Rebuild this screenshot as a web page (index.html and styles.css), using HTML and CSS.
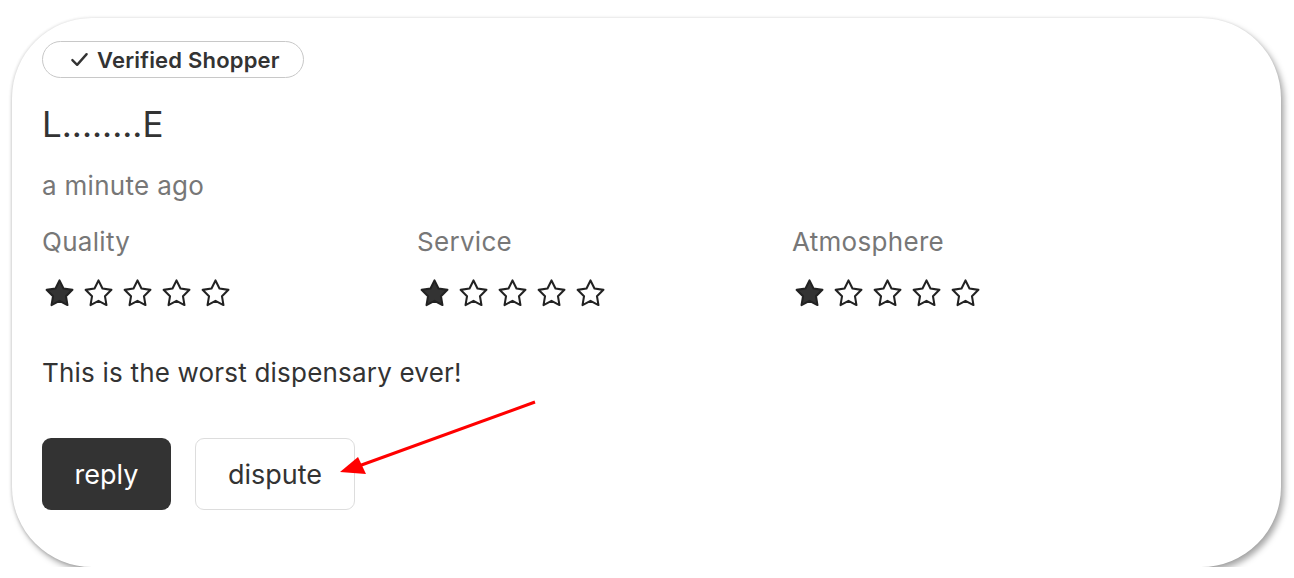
FILE: index.html
```html
<!DOCTYPE html>
<html lang="en">
  <head>
    <meta charset="UTF-8" />
    <meta name="viewport" content="width=device-width, initial-scale=1.0" />
    <title>Review</title>
    <link rel="stylesheet" href="styles.css">
  </head>
  <body>
    <!-- Review card -->
    <div class="card">
      <span class="badge">
        <svg class="check" viewBox="0 0 16 16" width="16" height="16">
          <path d="M2 8.5l4 4 8-9" fill="none" stroke="#333" stroke-width="2" stroke-linecap="round" stroke-linejoin="round" />
        </svg>
        Verified Shopper
      </span>
      <h1 class="name">L........E</h1>
      <p class="time">a minute ago</p>

      <div class="ratings">
        <div class="rating">
          <div class="label">Quality</div>
          <div class="stars" data-score="1"></div>
        </div>
        <div class="rating">
          <div class="label">Service</div>
          <div class="stars" data-score="1"></div>
        </div>
        <div class="rating">
          <div class="label">Atmosphere</div>
          <div class="stars" data-score="1"></div>
        </div>
      </div>

      <p class="text">This is the worst dispensary ever!</p>

      <div class="actions">
        <button class="btn btn-dark">reply</button>
        <button class="btn btn-light">dispute</button>
      </div>
    </div>

    <!-- Annotation arrow -->
    <svg class="arrow" width="1294" height="578" viewBox="0 0 1294 578">
      <line x1="535" y1="402" x2="356" y2="467" stroke="#f00" stroke-width="3" />
      <polygon points="340,472 358,457 366,474" fill="#f00" />
    </svg>

    <script>
      // Draw the stars for each rating
      var starPath = "M12 2.5l2.9 5.9 6.5.95-4.7 4.6 1.1 6.45L12 17.35l-5.8 3.05 1.1-6.45-4.7-4.6 6.5-.95z";
      var rows = document.querySelectorAll(".stars");
      for (var i = 0; i < rows.length; i++) {
        var score = parseInt(rows[i].getAttribute("data-score"));
        var html = "";
        for (var j = 0; j < 5; j++) {
          var fill = j < score ? "#333" : "#fff";
          html += '<svg class="star" viewBox="0 0 24 24" width="33" height="33">' +
            '<path d="' + starPath + '" fill="' + fill + '" stroke="#222" stroke-width="1.5" stroke-linejoin="round" /></svg>';
        }
        rows[i].innerHTML = html;
      }
    </script>
  </body>
</html>
```

FILE: styles.css
```css
body {
  margin: 0;
  background-color: #fff;
  font-family: Inter, "Noto Sans", sans-serif;
  color: #333;
}

.card {
  margin: 18px 13px 0 12px;
  height: 549px;
  box-sizing: border-box;
  padding: 23px 30px;
  border-radius: 80px;
  background-color: #fff;
  box-shadow: 3px 4px 6px rgba(0, 0, 0, 0.35), -1px 0 3px rgba(0, 0, 0, 0.12);
}

.badge {
  display: inline-flex;
  align-items: center;
  gap: 8px;
  height: 37px;
  box-sizing: border-box;
  padding: 0 23px 0 27px;
  border: 1px solid #c8c8c8;
  border-radius: 20px;
  font-size: 22px;
  font-weight: 600;
  letter-spacing: 0.2px;
  color: #333;
}

.check {
  width: 19px;
  height: 19px;
}

.name {
  margin: 26px 0 0;
  font-size: 35px;
  font-weight: 400;
  line-height: 40px;
}

.time {
  margin: 27px 0 0;
  font-size: 26px;
  line-height: 30px;
  letter-spacing: 0.3px;
  color: #777;
}

.ratings {
  display: grid;
  grid-template-columns: 375px 375px 375px;
  margin-top: 26px;
}

.label {
  font-size: 26px;
  line-height: 30px;
  letter-spacing: 0.3px;
  color: #777;
}

.stars {
  display: flex;
  gap: 6px;
  margin-top: 20px;
  margin-left: 1px;
}

.star {
  display: block;
}

.text {
  margin: 48px 0 0;
  font-size: 26px;
  line-height: 30px;
  letter-spacing: 0.2px;
  color: #333;
}

.actions {
  display: flex;
  gap: 24px;
  margin-top: 50px;
}

.btn {
  height: 72px;
  border-radius: 9px;
  font-family: inherit;
  font-size: 27px;
  cursor: pointer;
}

.btn-dark {
  width: 129px;
  background-color: #333;
  border: none;
  color: #fff;
}

.btn-light {
  width: 160px;
  background-color: #fff;
  border: 1px solid #ddd;
  color: #333;
}

.arrow {
  position: absolute;
  top: 0;
  left: 0;
  pointer-events: none;
}
```
